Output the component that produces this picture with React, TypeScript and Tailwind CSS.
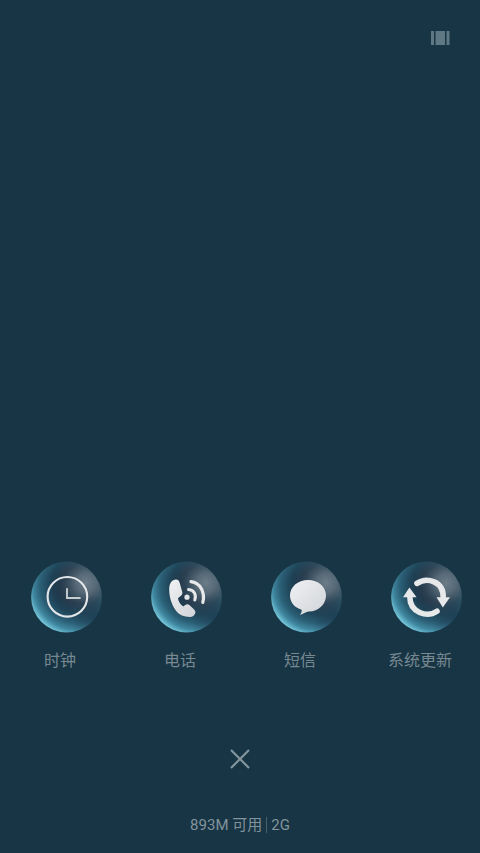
import type { ReactNode } from "react";

const labelFont = "font-['Roboto','Noto_Sans_CJK_SC',sans-serif]";

function Orb({ id, children }: { id: string; children: ReactNode }) {
  return (
    <svg viewBox="0 0 72 72" className="h-18 w-18" aria-hidden="true">
      <defs>
        <radialGradient id={`${id}-rim`} gradientUnits="userSpaceOnUse" cx="47" cy="25" r="50">
          <stop offset="0" stopColor="#1b3042" />
          <stop offset="0.36" stopColor="#1b3144" />
          <stop offset="0.56" stopColor="#20465a" />
          <stop offset="0.74" stopColor="#2b6077" />
          <stop offset="0.88" stopColor="#3f869f" />
          <stop offset="1" stopColor="#72c4d9" />
        </radialGradient>
        <radialGradient id={`${id}-shine`} gradientUnits="userSpaceOnUse" cx="56" cy="22" r="33">
          <stop offset="0" stopColor="#a3afb6" stopOpacity="0.6" />
          <stop offset="0.3" stopColor="#98a7af" stopOpacity="0.48" />
          <stop offset="0.65" stopColor="#80939e" stopOpacity="0.18" />
          <stop offset="1" stopColor="#80939e" stopOpacity="0" />
        </radialGradient>
        <radialGradient id={`${id}-shade`} gradientUnits="userSpaceOnUse" cx="66" cy="58" r="24">
          <stop offset="0" stopColor="#1a3447" stopOpacity="0.75" />
          <stop offset="1" stopColor="#1a3447" stopOpacity="0" />
        </radialGradient>
        <linearGradient id={`${id}-ink`} x1="0" y1="0" x2="1" y2="1">
          <stop offset="0" stopColor="#f0f1f3" />
          <stop offset="1" stopColor="#d0d3d8" />
        </linearGradient>
      </defs>
      <circle cx="36.5" cy="36" r="35.4" fill={`url(#${id}-rim)`} />
      <circle cx="36.5" cy="36" r="35.4" fill={`url(#${id}-shine)`} />
      <circle cx="36.5" cy="36" r="35.4" fill={`url(#${id}-shade)`} />
      {children}
    </svg>
  );
}

function ClockGlyph() {
  return (
    <g fill="none" stroke="#e4e7ea">
      <circle cx="37.4" cy="35.8" r="19.8" strokeWidth="2.1" />
      <path d="M37 27.3V37H50.6" stroke="#c6cdd1" strokeWidth="1.9" />
    </g>
  );
}

function PhoneGlyph() {
  return (
    <g>
      <path
        d="M25.4 18.6C21.2 19.4 19.2 23 19.2 28.5C19.2 35.5 21.2 43 25.8 49.6C29.2 54.4 35 56.2 40.4 56C43.4 55.8 45 53.6 45.4 51.6C45.6 50.2 44.6 49 43.4 47.8L39.6 44.2C38.2 42.8 36.6 43 35.2 44L33.4 45.4C30.6 43.6 28.4 40.6 28 37.2L31.2 34.6C32.4 33.6 32.6 32.2 32.2 30.8L29.6 21.6C29 19.4 27.6 18.2 25.4 18.6Z"
        fill="url(#phone-ink)"
      />
      <circle cx="37" cy="36.2" r="2.6" fill="#e2e5e8" />
      <g fill="none" stroke="#e6e8ea" strokeLinecap="round">
        <path d="M38.6 28.6C44.2 29 46.6 34 44.8 39" strokeWidth="3" />
        <path d="M41 20.6C50.4 21.6 55.4 31.6 52.8 41.4" strokeWidth="3.2" />
      </g>
    </g>
  );
}

function MessageGlyph() {
  return (
    <path
      d="M38 19C48.3 19 56 25.8 56 34.6C56 43.4 48.4 50.5 39 50.6C35.8 50.8 33.2 53.2 30 53.9C31.3 52.2 32 50.4 31.6 48.8C24.6 46.8 20 41.2 20 34.8C20 25.9 27.7 19 38 19Z"
      fill="url(#message-ink)"
    />
  );
}

function UpdateGlyph() {
  return (
    <g>
      <g fill="none" stroke="#e6e8ea" strokeWidth="5.6" strokeLinecap="round">
        <path d="M27 22.4C37 15.6 53.8 20.5 53.2 36.4" />
        <path d="M47 50.2C37 57 19.8 51.6 19.8 35.4" />
      </g>
      <g fill="#e6e8ea">
        <path d="M46.5 36.2H60L52.8 46.4Z" />
        <path d="M13 36.2H26.6L19.4 26.4Z" />
      </g>
    </g>
  );
}

const apps = [
  { id: "clock", label: "时钟", glyph: <ClockGlyph /> },
  { id: "phone", label: "电话", glyph: <PhoneGlyph /> },
  { id: "message", label: "短信", glyph: <MessageGlyph /> },
  { id: "update", label: "系统更新", glyph: <UpdateGlyph /> },
];

export default function App() {
  return (
    <main
      className={`flex min-h-screen flex-col bg-[#173545] text-[#778891] ${labelFont}`}
    >
      <header className="flex justify-end px-7 pt-7">
        <button type="button" aria-label="切换视图" className="flex h-5 w-6 items-center justify-center">
          <svg viewBox="0 0 20 14" className="h-4 w-5" fill="#5f7884" aria-hidden="true">
            <path d="M1 0H4V14H1ZM5.5 0H15V14H5.5ZM16.5 0H19.5V14H16.5Z" />
          </svg>
        </button>
      </header>

      <section className="mt-auto grid grid-cols-4">
        {apps.map((app) => (
          <button
            key={app.id}
            type="button"
            className="flex flex-col items-center gap-4 text-base leading-6"
          >
            <span className="pl-3">
              <Orb id={app.id}>{app.glyph}</Orb>
            </span>
            <span>{app.label}</span>
          </button>
        ))}
      </section>

      <footer className="flex flex-col items-center gap-[38px] pt-[70px] pb-4">
        <button type="button" aria-label="清除全部" className="flex h-8 w-8 items-center justify-center">
          <svg viewBox="0 0 20 20" className="h-5 w-5" stroke="#83949c" strokeWidth="2.2" aria-hidden="true">
            <path d="M1 1L19 19M19 1L1 19" />
          </svg>
        </button>
        <p className="flex items-center text-[15px] leading-6 text-[#82939b]">
          <span>893M 可用</span>
          <span className="mx-1 h-4 w-px bg-[#48606c]" />
          <span>2G</span>
        </p>
      </footer>
    </main>
  );
}
